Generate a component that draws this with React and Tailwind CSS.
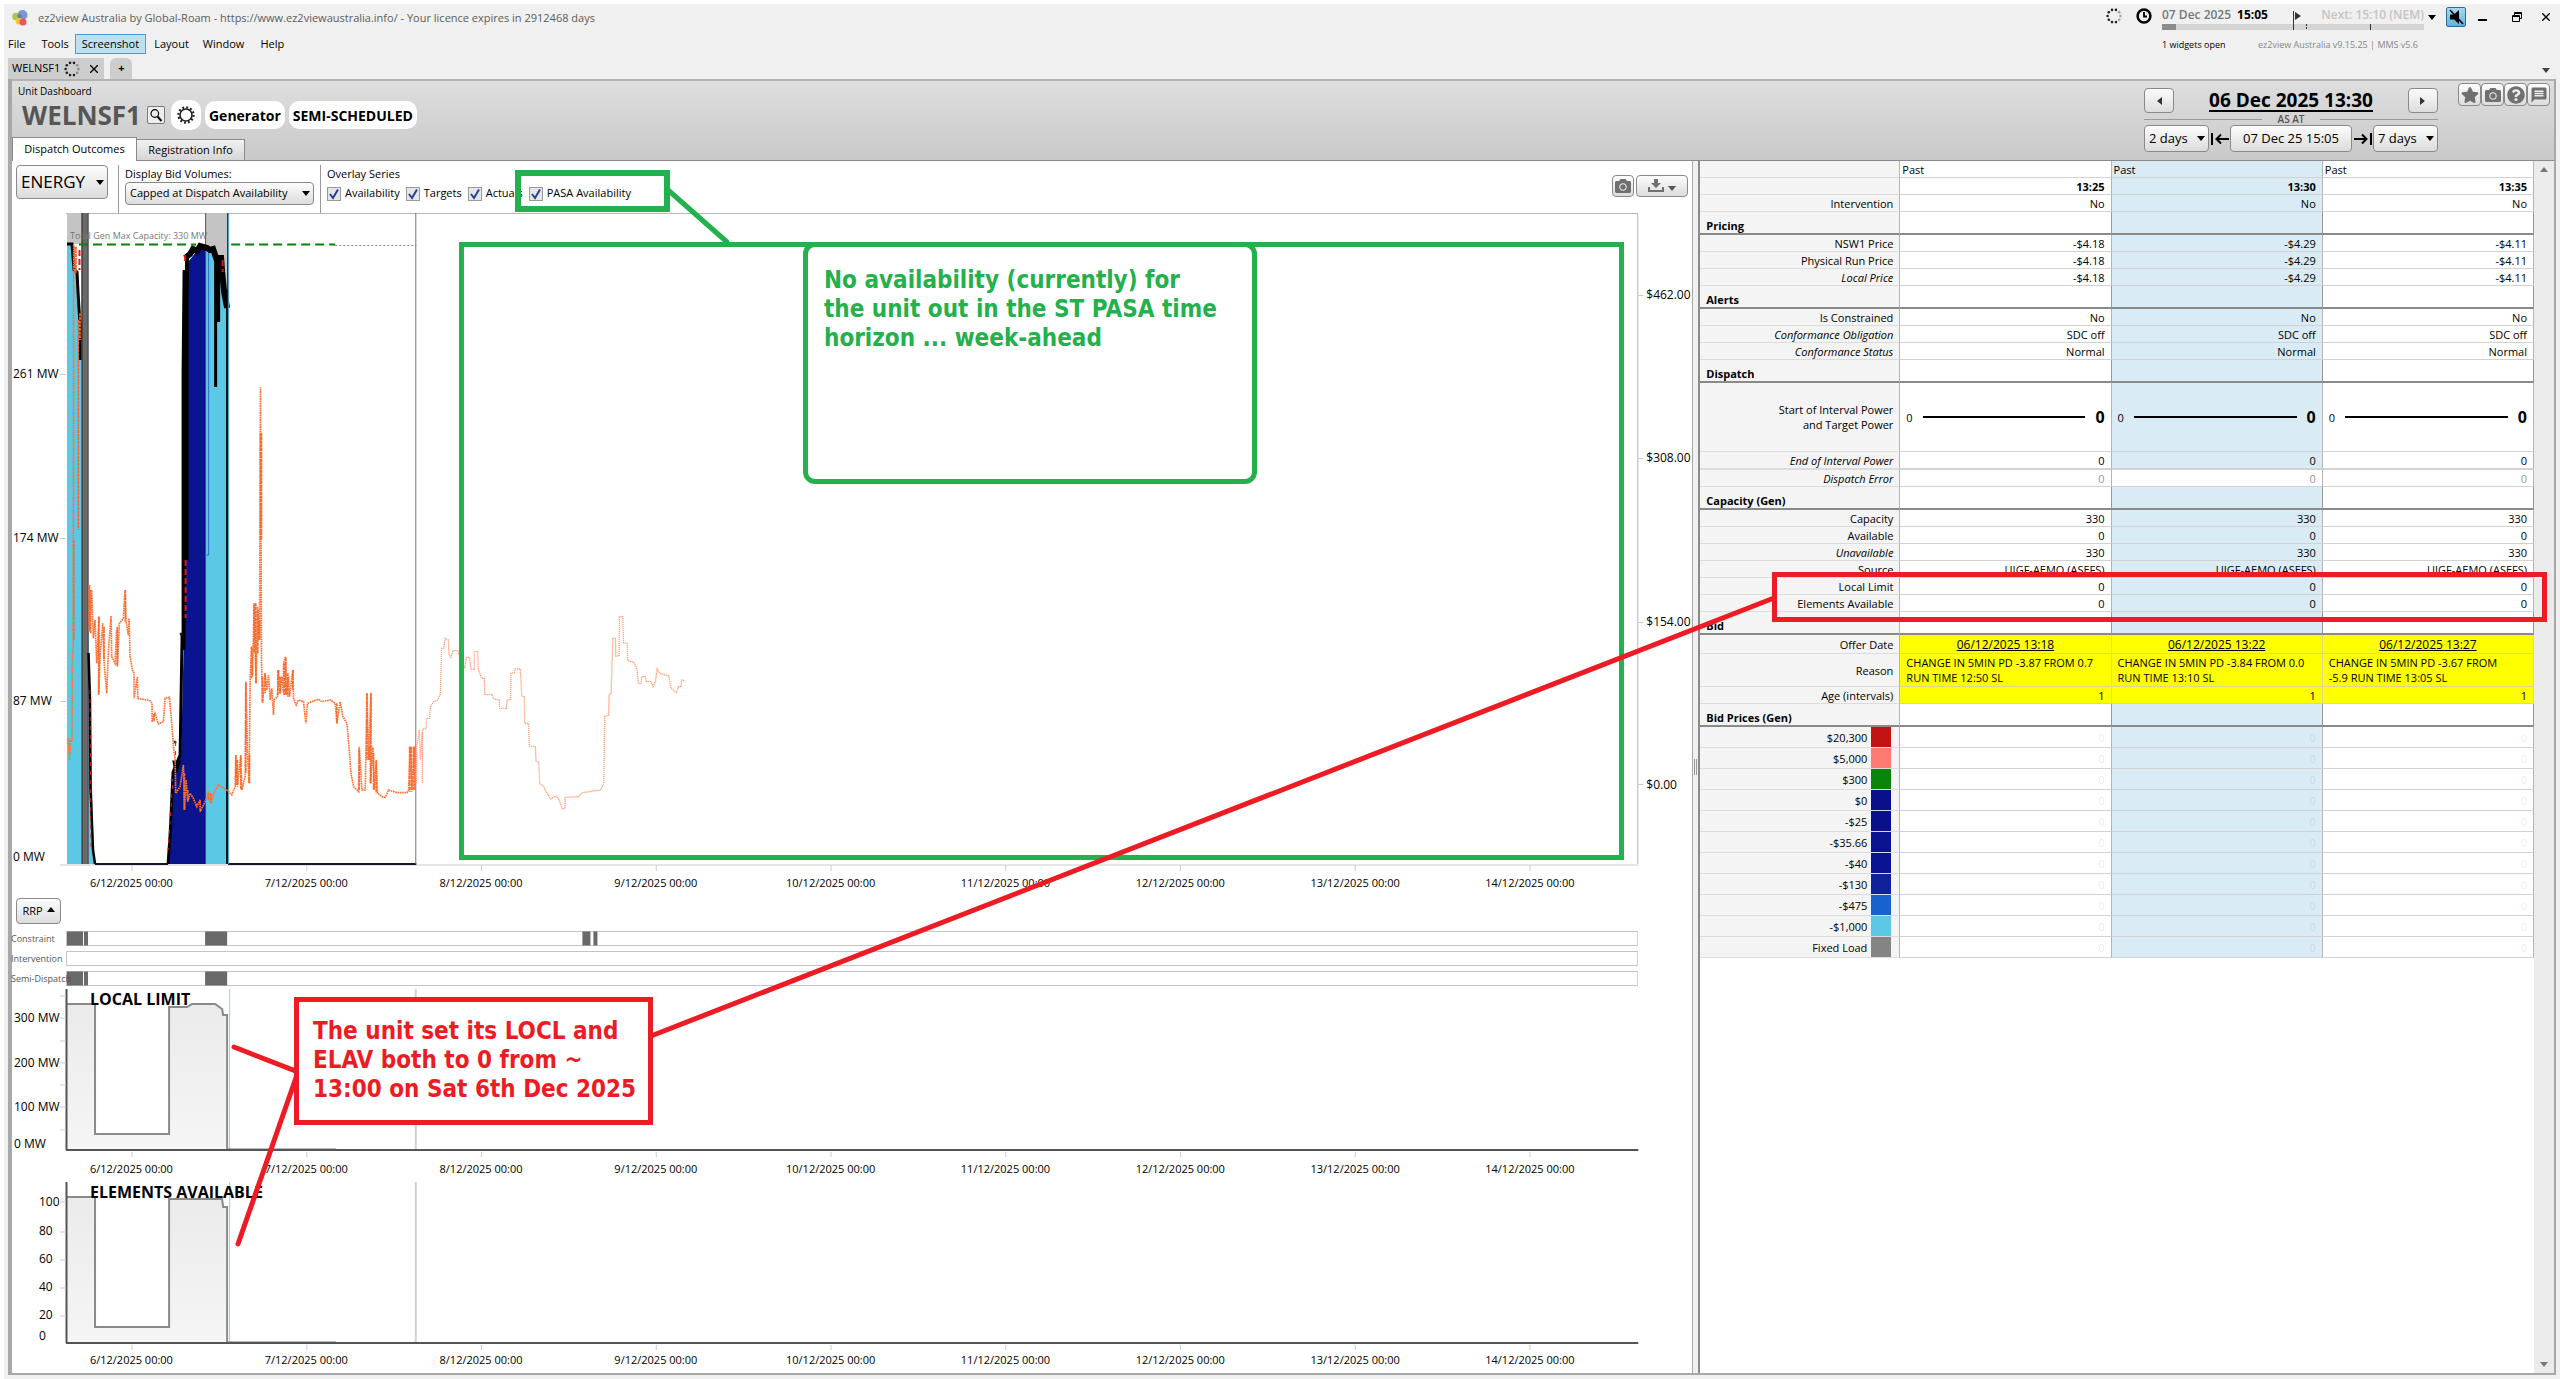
import { useState } from "react";
import clsx from "clsx";
import { FaStar, FaCamera, FaQuestionCircle } from "react-icons/fa";
import { MdMessage } from "react-icons/md";

const DATES = [6, 7, 8, 9, 10, 11, 12, 13, 14].map((d) => `${d}/12/2025 00:00`);
const TICKS = DATES.map((d, i) => 132 + i * 174.6);

const BTN = "rounded border border-[#8a8a8a] bg-linear-to-b from-[#fdfdfd] to-[#dcdcdc]";

const ROWS = [
  { label: "Intervention", values: ["No", "No", "No"] },
  { section: "Pricing" },
  { label: "NSW1 Price", values: ["-$4.18", "-$4.29", "-$4.11"] },
  { label: "Physical Run Price", values: ["-$4.18", "-$4.29", "-$4.11"] },
  { label: "Local Price", italic: true, values: ["-$4.18", "-$4.29", "-$4.11"] },
  { section: "Alerts" },
  { label: "Is Constrained", values: ["No", "No", "No"] },
  { label: "Conformance Obligation", italic: true, values: ["SDC off", "SDC off", "SDC off"] },
  { label: "Conformance Status", italic: true, values: ["Normal", "Normal", "Normal"] },
  { section: "Dispatch" },
  { power: true },
  { label: "End of Interval Power", italic: true, heavy: true, values: ["0", "0", "0"] },
  { label: "Dispatch Error", italic: true, plain: true, values: ["0", "0", "0"] },
  { section: "Capacity (Gen)" },
  { label: "Capacity", values: ["330", "330", "330"] },
  { label: "Available", values: ["0", "0", "0"] },
  { label: "Unavailable", italic: true, values: ["330", "330", "330"] },
  { label: "Source", values: ["UIGF-AEMO (ASEFS)", "UIGF-AEMO (ASEFS)", "UIGF-AEMO (ASEFS)"] },
  { label: "Local Limit", values: ["0", "0", "0"] },
  { label: "Elements Available", values: ["0", "0", "0"] },
  { section: "Bid" },
];

const OFFERS = [
  { date: "06/12/2025 13:18", reason: ["CHANGE IN 5MIN PD -3.87 FROM 0.7", "RUN TIME 12:50 SL"] },
  { date: "06/12/2025 13:22", reason: ["CHANGE IN 5MIN PD -3.84 FROM 0.0", "RUN TIME 13:10 SL"] },
  { date: "06/12/2025 13:27", reason: ["CHANGE IN 5MIN PD -3.67 FROM", "-5.9 RUN TIME 13:05 SL"] },
];

const BANDS = [
  ["$20,300", "bg-[#c31414]"],
  ["$5,000", "bg-[#ff7a72]"],
  ["$300", "bg-[#0a850a]"],
  ["$0", "bg-[#0a0f8c]"],
  ["-$25", "bg-[#0a0f8c]"],
  ["-$35.66", "bg-[#0a128f]"],
  ["-$40", "bg-[#0a1492]"],
  ["-$130", "bg-[#10219c]"],
  ["-$475", "bg-[#1862d0]"],
  ["-$1,000", "bg-[#5bc8e6]"],
  ["Fixed Load", "bg-[#848484]"],
];

// price trace, stored at three times the plot scale
const PRICE =
  "M205 535 209 600 211 540 216 545 217 300 220 250 221 -945 M268 75 268 215 275 90 280 235 285 180 290 310 297 170 296 405 300 290 308 190 312 305 320 400 325 275 333 168 335 290 345 310 350 205 352 320 358 190 370 175 375 90 378 185 385 225 387 175 390 290 397 330 402 340 402 415 412 350 413 415 450 422 456 430 456 485 465 460 475 492 490 485 495 415 508 412 515 490 520 560 525 600 527 700 540 680 550 615 553 750 558 660 563 725 570 700 580 715 590 740 600 720 600 755 615 725 625 700 632 730 640 700 655 675 665 680 680 690 695 705 705 680 707 585 712 675 722 585 725 690 735 650 737 365 742 580 747 670 750 350 755 260 757 350 762 130 765 275 768 370 772 140 778 240 781 -518 784 300 787 430 795 340 800 390 805 345 810 420 815 385 820 465 822 420 832 410 835 330 840 400 845 350 850 400 850 310 856 290 858 405 865 350 868 410 878 330 880 415 888 435 895 420 910 425 917 490 922 430 935 425 955 418 965 425 990 420 1005 430 1010 490 1020 425 1028 470 1040 490 1048 580 1052 640 1060 680 1075 695 1077 560 1085 690 1095 690 1100 400 1105 600 1112 400 1110 670 1118 560 1122 690 1128 605 1132 700 1145 710 1155 712 1165 690 1190 698 1220 698 1225 690 1230 560 1235 690 1242 560 1245 690";
const SPIKES =
  "M235 -720V-90 M240 -740V-660 M224 -940V-860 M228 -940V-860 M221 -60V240 M268 75V210 M272 90V220 M376 90V185 M296 170V400 M312 200V300 M352 200V315 M707 590V675 M712 600V680 M722 590V690 M737 370V640 M748 585V670 M754 260V355 M762 135V280 M767 130V370 M773 150V280 M778 180V240 M781 -380V-60 M784 -380V-60 M787 350V425 M795 340V400 M833 330V405 M840 350V400 M852 310V405 M857 295V405 M863 340V410 M878 330V390 M1010 430V490 M1077 570V690 M1100 400V600 M1112 400V670 M1107 560V600 M1120 580V690 M1128 600V700 M553 640V750 M563 690V720 M1228 560V695 M1234 560V695 M1241 560V690 M462 462V485 M625 700V720 M632 700V728";
const FORECAST =
  "M48 550 50 435 57 390 60 480 66 395 66 550 67 388 78 385 78 355 88 355 90 320 100 305 112 300 120 282 124 145 130 145 135 115 144 120 146 165 152 172 158 152 172 152 194 205 198 172 208 172 212 208 222 208 222 155 232 155 234 208 244 235 252 235 253 283 275 283 280 297 297 300 298 325 318 325 320 300 330 298 332 220 342 218 344 207 360 207 364 288 372 290 373 370 384 370 387 438 405 440 407 484 415 486 418 550 430 560 440 580 452 597 460 590 470 590 478 605 486 627 494 625 494 592 535 590 545 578 600 570 610 550 613 350 625 345 626 285 632 280 637 115 645 115 646 168 656 168 657 50 667 50 669 128 680 130 682 182 700 187 710 208 713 250 722 250 724 230 735 230 737 245 752 245 758 260 765 245 770 207 778 220 805 228 812 265 828 278 834 260 842 260 843 240 852 242";

function Spinner() {
  const dots = [0, 1, 2, 3, 4, 5, 6, 7, 8, 9];
  return (
    <svg viewBox="-8 -8 16 16" className="size-4">
      {dots.map((i) => (
        <circle
          key={i}
          cx={6.4 * Math.cos((i * Math.PI) / 5)}
          cy={6.4 * Math.sin((i * Math.PI) / 5)}
          r="1.3"
          fill="#222"
          opacity={i < 2 || i === 9 ? 0.4 : 1}
        />
      ))}
    </svg>
  );
}

function Caret({ className = "fill-black", up = false }) {
  return (
    <svg viewBox="0 0 8 5" className={clsx("h-[5px] w-2 shrink-0", className)}>
      <path d={up ? "M0 5 4 0 8 5Z" : "M0 0H8L4 5Z"} />
    </svg>
  );
}

function DropDown({ id, label, value, className }) {
  return (
    <span className="relative inline-flex items-center">
      <select
        id={id}
        aria-label={label}
        defaultValue={value}
        className={clsx(BTN, "appearance-none", className)}
      >
        <option>{value}</option>
      </select>
      <span className="pointer-events-none absolute right-1">
        <Caret />
      </span>
    </span>
  );
}

function TitleBar() {
  return (
    <header className="flex justify-between">
      <div>
        <div className="flex h-7 items-center gap-2.5 pl-2 text-[11px] text-[#5c5c5c]">
          <svg viewBox="0 0 16 16" className="size-4">
            <circle cx="10.500" cy="5" r="5" fill="#7f95cc" />
            <circle cx="4" cy="6.500" r="3.800" fill="#a5c94a" />
            <circle cx="7" cy="11" r="3.400" fill="#f3c531" />
            <circle cx="11" cy="12" r="3.500" fill="#e8575f" />
            <circle cx="7.500" cy="6" r="2.200" fill="#5e7fa6" />
          </svg>
          ez2view Australia by Global-Roam - https://www.ez2viewaustralia.info/ - Your licence expires in 2912468 days
        </div>
        <nav className="mt-0.5 flex h-5 items-center text-[11px]">
          <button className="px-1">File</button>
          <button className="ml-2 px-1">Tools</button>
          <button className="ml-0.5 h-5 border border-[#3ba4dc] bg-[#bfe0f0] px-1.5">Screenshot</button>
          <button className="ml-1 px-1">Layout</button>
          <button className="ml-1.5 px-1">Window</button>
          <button className="ml-2 px-1">Help</button>
        </nav>
        <div className="mt-1 ml-1 flex h-[21px] items-stretch gap-1.5 text-[11px]">
          <div className="flex items-center gap-1 bg-[#cdcdcd] pl-1">
            WELNSF1 <Spinner />
            <button aria-label="Close tab" className="px-1.5">
              <svg viewBox="0 0 8 8" className="size-2 stroke-black" strokeWidth="1.300">
                <path d="M0 0 8 8M8 0 0 8" />
              </svg>
            </button>
          </div>
          <button className="w-[22px] rounded-t-md bg-[#cdcdcd] font-bold">+</button>
        </div>
      </div>

      <div className="flex flex-col justify-between pr-2.5">
        <div className="flex items-start">
          <div className="mt-1 flex items-center gap-3.5">
            <Spinner />
            <svg viewBox="0 0 16 16" className="size-4 fill-none stroke-black" strokeWidth="2.500">
              <circle cx="8" cy="8" r="6.400" />
              <path d="M8 4V8.500H11" strokeWidth="1.800" />
            </svg>
          </div>
          <div className="ml-2.5 w-[262px]">
            <div className="mt-[3px] flex h-[15px] items-center text-[12px] font-semibold">
              <span className="text-[#777]">07 Dec 2025</span>
              <span className="ml-1.5 font-bold">15:05</span>
              <span className="ml-auto text-[#c4c4c4]">Next: 15:10 (NEM)</span>
            </div>
            <svg viewBox="0 0 262 20" className="-mt-3 block h-5 w-full" preserveAspectRatio="none">
              <path d="M0 14H262V20H0Z" fill="#d4d4d4" />
              <path d="M0 14H14V20H0Z" fill="#8c8c8c" />
              <path d="M131.500 1V20M208.500 14V20" stroke="#333" />
              <path d="M144.500 14V20" stroke="#333" strokeDasharray="2 1" />
              <path d="M133 2 139 6 133 10Z" fill="#333" />
            </svg>
            <div className="mt-2 flex justify-between text-[9px]">
              <span>1 widgets open</span>
              <span className="pr-1.5 text-[#888]">ez2view Australia v9.15.25 | MMS v5.6</span>
            </div>
          </div>
          <div className="mt-[3px] flex items-center">
            <button aria-label="More times" className="ml-1">
              <Caret />
            </button>
            <button
              aria-label="Mute"
              className="ml-2.5 flex size-5 items-center justify-center rounded-xs border border-[#2f6d94] bg-linear-to-b from-[#a9d8f3] to-[#5fb1e0]"
            >
              <svg viewBox="0 0 16 16" className="size-4">
                <path d="M2 5.500H6L11 1V15L6 10.500H2Z" />
                <path d="M2 1 15 15" stroke="#000" strokeWidth="1.600" />
              </svg>
            </button>
            <button aria-label="Minimise" className="ml-3">
              <svg viewBox="0 0 10 10" className="size-2.5"><path d="M0 7H9V9H0Z" /></svg>
            </button>
            <button aria-label="Restore" className="ml-6">
              <svg viewBox="0 0 10 10" className="size-2.5 fill-none stroke-black">
                <path d="M.5 3.500H7.500V9.500H.5ZM.5 4.500H7.500M2.500 3V.5H9.500V6.500H8M2.500 1.500H9.500" />
              </svg>
            </button>
            <button aria-label="Close" className="ml-5">
              <svg viewBox="0 0 8 8" className="size-2 stroke-black" strokeWidth="1.400">
                <path d="M0 0 8 8M8 0 0 8" />
              </svg>
            </button>
          </div>
        </div>
        <div className="mb-1.5 self-end">
          <Caret className="fill-[#444]" />
        </div>
      </div>
    </header>
  );
}

function UnitHeader() {
  const iconBtn = clsx(BTN, "flex size-[23px] items-center justify-center text-[#707070]");
  return (
    <div className="flex h-[82px] justify-between border-t-2 border-b border-t-[#b4b4b4] border-b-[#8a8a8a] bg-linear-to-b from-[#dedede] to-[#c9c9c9]">
      <div className="flex flex-col">
        <div className="px-1.5 pt-0.5 text-[10px] leading-4">Unit Dashboard</div>
        <div className="flex h-8 items-center pl-2.5">
          <h1 className="text-[26px] leading-8 font-bold text-[#565656]">WELNSF1</h1>
          <button aria-label="Find unit" className="ml-1.5 flex size-[18px] items-center justify-center rounded-xs border border-[#777] bg-[#eee]">
            <svg viewBox="0 0 14 14" className="size-3.5 fill-none stroke-black" strokeWidth="1.200">
              <circle cx="5.800" cy="5.500" r="3.800" />
              <path d="M8.500 8.500 12.500 13" strokeWidth="2" />
            </svg>
          </button>
          <button aria-label="Settings" className="ml-1.5 flex h-[30px] w-[30px] items-center justify-center rounded-[10px] bg-white">
            <svg viewBox="-10 -10 20 20" className="size-5 fill-none stroke-[#222]">
              <circle r="6" strokeWidth="1.600" />
              <circle r="7.600" strokeWidth="2.200" strokeDasharray="1.900 2.080" />
            </svg>
          </button>
          <span className="ml-1 flex h-7 items-center rounded-[10px] bg-white px-1 text-[14px] font-bold">Generator</span>
          <span className="ml-1 flex h-7 items-center rounded-[10px] bg-white px-1 text-[14px] font-bold">SEMI-SCHEDULED</span>
        </div>
        <div role="tablist" className="mt-auto flex items-end text-[11px]">
          <button role="tab" aria-selected="true" className="-mb-px h-6 w-[125px] border border-b-0 border-[#8a8a8a] bg-white">
            Dispatch Outcomes
          </button>
          <button role="tab" aria-selected="false" className="h-[21px] w-[108px] border border-b-0 border-l-0 border-[#8a8a8a] bg-linear-to-b from-[#f2f2f2] to-[#d6d6d6]">
            Registration Info
          </button>
        </div>
      </div>

      <div className="flex items-start gap-5 pt-0.5 pr-1">
        <div className="mt-[5px] w-[294px]">
          <div className="flex items-center justify-between">
            <button aria-label="Previous interval" className={clsx(BTN, "flex h-[25px] w-[30px] items-center justify-center")}>
              <svg viewBox="0 0 5 8" className="h-2 w-[5px] fill-[#333]"><path d="M5 0V8L0 4Z" /></svg>
            </button>
            <button className="border-b-2 border-black text-[19px] leading-5 font-bold">06 Dec 2025 13:30</button>
            <button aria-label="Next interval" className={clsx(BTN, "flex h-[25px] w-[30px] items-center justify-center")}>
              <svg viewBox="0 0 5 8" className="h-2 w-[5px] fill-[#333]"><path d="M0 0V8L5 4Z" /></svg>
            </button>
          </div>
          <div className="flex items-center gap-4 pt-px text-[10px] leading-[11px] font-semibold text-[#555]">
            <hr className="flex-1 border-[#999]" />
            AS AT
            <hr className="flex-1 border-[#999]" />
          </div>
          <div className="flex items-center justify-between text-[13px]">
            <DropDown label="Days back" value="2 days" className="h-[27px] w-[65px] pl-1" />
            <svg viewBox="0 0 18 12" className="h-3 w-[18px] fill-none stroke-black" strokeWidth="2">
              <path d="M1 0V12M18 6H6M10 1.500 5.500 6 10 10.500" />
            </svg>
            <button className={clsx(BTN, "h-[27px] w-[122px]")}>07 Dec 25 15:05</button>
            <svg viewBox="0 0 18 12" className="h-3 w-[18px] fill-none stroke-black" strokeWidth="2">
              <path d="M17 0V12M0 6H12M8 1.500 12.500 6 8 10.500" />
            </svg>
            <DropDown label="Days ahead" value="7 days" className="h-[27px] w-[65px] pl-1" />
          </div>
        </div>
        <div className="flex">
          <button aria-label="Favourite" className={iconBtn}><FaStar className="size-[18px]" /></button>
          <button aria-label="Snapshot" className={iconBtn}><FaCamera className="size-4" /></button>
          <button aria-label="Help" className={iconBtn}><FaQuestionCircle className="size-[18px]" /></button>
          <button aria-label="Comments" className={iconBtn}><MdMessage className="size-[18px]" /></button>
        </div>
      </div>
    </div>
  );
}

function Toolbar() {
  const [series, setSeries] = useState({
    Availability: true,
    Targets: true,
    Actuals: true,
    "PASA Availability": true,
  });
  return (
    <div className="flex h-[52px] pt-1 pl-1 text-[11px]">
      <div className="border-r border-[#999] pr-2.5">
        <DropDown label="Market" value="ENERGY" className="h-[34px] w-[92px] pl-1 text-[17px]" />
      </div>
      <div className="ml-1.5 border-r border-[#999] pr-1.5">
        <label htmlFor="bid-volumes" className="block leading-[17px]">Display Bid Volumes:</label>
        <DropDown id="bid-volumes" value="Capped at Dispatch Availability" className="h-[23px] w-[189px] pl-1" />
      </div>
      <div className="ml-1.5">
        <div className="leading-[17px]">Overlay Series</div>
        <div className="flex h-[23px] items-center gap-1.5">
          {Object.keys(series).map((name) => (
            <label key={name} className="flex items-center gap-1">
              <span className="relative flex">
                <input
                  type="checkbox"
                  checked={series[name]}
                  onChange={() => setSeries({ ...series, [name]: !series[name] })}
                  className="size-3.5 appearance-none border border-[#9a9a9a] bg-[#e4e6ea]"
                />
                {series[name] && (
                  <svg viewBox="0 0 14 14" className="pointer-events-none absolute size-3.5 fill-none stroke-[#2b3f90]" strokeWidth="2">
                    <path d="M3 7 6 11 11 2.500" />
                  </svg>
                )}
              </span>
              {name}
            </label>
          ))}
        </div>
      </div>
      <div className="mt-2.5 mr-1 ml-auto flex h-[22px] gap-0.5">
        <button aria-label="Copy chart" className={clsx(BTN, "flex w-[22px] items-center justify-center text-[#707070]")}>
          <FaCamera className="size-4" />
        </button>
        <button aria-label="Export" className={clsx(BTN, "flex w-[52px] items-center justify-center gap-1")}>
          <svg viewBox="0 0 16 14" className="h-3.5 w-4 fill-[#707070]">
            <path d="M6 0H10V4H13L8 9 3 4H6ZM0 8H2V11H14V8H16V13H0Z" />
          </svg>
          <Caret className="mt-1 fill-[#555]" />
        </button>
      </div>
    </div>
  );
}

function DateAxis({ className }) {
  return (
    <div className={clsx("mr-[75px] ml-8 flex text-[11px]", className)}>
      {DATES.map((d) => (
        <span key={d} className="flex-1 text-center">{d}</span>
      ))}
    </div>
  );
}

function YAxis({ items, right }) {
  return (
    <div className={clsx("text-[12px] leading-4", right && "pl-2")}>
      {items.map(([text, height]) => (
        <div key={text} className={clsx("flex items-end", height)}>{text}</div>
      ))}
    </div>
  );
}

function MainChart() {
  return (
    <div className="grid grid-cols-[54px_1fr_54px]">
      <div className="pl-px">
        <YAxis
          items={[
            ["261 MW", "h-[169px]"],
            ["174 MW", "h-[164px]"],
            ["87 MW", "h-[163px]"],
            ["0 MW", "h-[156px]"],
          ]}
        />
      </div>
      <div className="relative">
        <svg viewBox="66 213 1571 652" preserveAspectRatio="none" className="block h-[652px] w-full overflow-visible">
          <path d="M66 213.500H1636.500V864" fill="none" stroke="#b8b8b8" />
          <path d="M60 865H1637" stroke="#ccc" />
          <path d={TICKS.map((x) => `M${x} 865V871`).join("")} stroke="#ccc" />
          <path d="M60 374.500H66M60 538.500H66M60 701.500H66M1637 295.500H1642M1637 458.500H1642M1637 622.500H1642M1637 784.500H1642" stroke="#ccc" />
          <path d="M67 213H88V244H67ZM205 213H229V320H205Z" fill="#c4c4c4" />
          <path d="M67 244H73L78 275 81 360V864H67ZM88 600 90 700 94 864H88Z" fill="#5bc8e6" />
          <path d="M81 213H88.500V864H81Z" fill="#6a6a6a" />
          <path d="M82.500 213V864M88 213V864" stroke="#484848" />
          <path d="M168 864 173 775 181 755 184 630 186 300 188 262 196 252 206 247V864Z" fill="#0a148f" />
          <path d="M206 248H214L222 262 225 295 228 310V864H206Z" fill="#5bc8e6" />
          <path d="M208.500 250V555H206" fill="none" stroke="#2b6fc0" />
          <path d="M205.500 213V864" stroke="#555" />
          <g fill="none" stroke="#000">
            <path d="M67 244H72L74 270 77 272 78 292 80 325V360" strokeWidth="3" />
            <path d="M88.500 653 90 700 90.500 788 93 850 95 864" strokeWidth="2.500" />
            <path d="M168 864 170 835 173 772 180 755 182 635" strokeWidth="3" />
            <path d="M174 762 179 762 176 772Z" fill="#000" strokeWidth="3" />
            <path d="M183.500 650V372L184.500 270" strokeWidth="4" />
            <path d="M186.500 560V300L187 258" strokeWidth="4" />
            <path d="M185 258 190 254 193 249 197 251 200 246 207 248 210 250 213 249 216 258 221 258 222 272 224 292 227 308" strokeWidth="6" />
            <path d="M215.500 255V387" strokeWidth="3" />
            <path d="M218 258V322" strokeWidth="4" />
            <path d="M95 864H168M228 864H416" stroke="#15152c" strokeWidth="2" />
            <path d="M227 290V864" strokeWidth="2" />
          </g>
          <path d="M185.500 560V618M79.500 250V270M185 255V262M222.500 260V272" stroke="#e8121c" strokeWidth="2" strokeDasharray="6 3" fill="none" />
          <path d="M90 690 91 850M175.500 742V760M172.500 785 168 850" stroke="#e8121c" strokeDasharray="4 5" fill="none" />
          <circle cx="175" cy="742" r="1.500" fill="#444" />
          <circle cx="172" cy="780" r="1.500" fill="#444" />
          <circle cx="181" cy="634" r="1.500" fill="#222" />
          <path d="M228.500 213V864" stroke="#4fb4e0" />
          <path d="M227.500 213V864" stroke="#222" />
          <path d="M79 244.500H196M231 244.500H335" stroke="#068206" strokeWidth="2" strokeDasharray="9 5" />
          <path d="M335 245.500H416" stroke="#888" strokeDasharray="2 2" />
          <path d="M415.500 213V864" stroke="#777" />
          <g transform="translate(0 560) scale(0.33333)" fill="none" strokeWidth="5">
            <path d={PRICE} stroke="#ff7236" strokeDasharray="5 2" />
            <path d={SPIKES} stroke="#f96a2c" strokeDasharray="9 2" />
          </g>
          <g transform="translate(400 600) scale(0.33333)">
            <path d={FORECAST} fill="none" stroke="#ffa27c" strokeWidth="4" strokeDasharray="4 2" />
          </g>
        </svg>
        <span className="absolute top-4 left-1 text-[9px] text-[#777]">Total Gen Max Capacity: 330 MW</span>
      </div>
      <YAxis
        right
        items={[
          ["$462.00", "h-[90px]"],
          ["$308.00", "h-[163px]"],
          ["$154.00", "h-[164px]"],
          ["$0.00", "h-[163px]"],
        ]}
      />
    </div>
  );
}

function Strip({ label, blocks }) {
  return (
    <div className="grid h-[15px] grid-cols-[54px_1fr_54px]">
      <span className="relative z-10 -ml-px text-[9px] leading-[15px] whitespace-nowrap text-[#555]">{label}</span>
      <svg viewBox="0 0 1571 15" preserveAspectRatio="none" className="h-[15px] w-full">
        <rect x="0.500" y="0.500" width="1570" height="14" fill="#fff" stroke="#c4c4c4" />
        {blocks.map(([x, w]) => (
          <rect key={x} x={x} y="0.500" width={w} height="14" fill="#696969" />
        ))}
      </svg>
    </div>
  );
}

function MiniChart({ title, axis, line, base, top, ticks, pad }) {
  const fillId = title.replace(" ", "");
  return (
    <div className="grid grid-cols-[54px_1fr_54px]">
      <div className={pad}>
        <YAxis items={axis} />
      </div>
      <div className="relative">
        <svg viewBox={`66 ${top} 1571 162`} preserveAspectRatio="none" className="block h-[162px] w-full overflow-visible">
          <defs>
            <linearGradient id={fillId} x2="0" y2="1">
              <stop offset="0" stopColor="#ebebeb" />
              <stop offset="1" stopColor="#f5f5f5" />
            </linearGradient>
          </defs>
          <path d={`M66 ${base}V${line}V${base}Z`} fill={`url(#${fillId})`} />
          <path d={`M66 ${line}V${base}`} fill="none" stroke="#8a8a8a" strokeWidth="2" />
          <path d={`M229.500 ${top}V${base}`} stroke="#9cd0ea" />
          <path d={`M415.500 ${top}V${base}`} stroke="#d0d0d0" strokeWidth="2" />
          <path d={`M227 ${base - 1}H336`} stroke="#777" />
          <path d={`M66.500 ${top}V${base}M66 ${base}H1637`} stroke="#555" strokeWidth="2" />
          <path d={TICKS.map((x) => `M${x} ${base + 2}V${base + 7}`).join("") + ticks.map((y) => `M60 ${y}H66`).join("")} stroke="#ccc" />
        </svg>
        <h2 className="absolute top-0 left-6 text-[16px] leading-5 font-bold whitespace-nowrap">{title}</h2>
      </div>
    </div>
  );
}

function ChartPane() {
  return (
    <section className="min-w-0 flex-1 bg-white">
      <Toolbar />
      <MainChart />
      <DateAxis className="h-[33px] items-center pt-1" />
      <button className={clsx(BTN, "ml-1 flex h-[26px] w-[45px] items-center justify-center gap-1 text-[11px]")}>
        RRP <Caret up className="mb-1 fill-black" />
      </button>
      <div className="mt-[7px] mb-[3px] flex flex-col gap-[5px]">
        <Strip label="Constraint" blocks={[[1, 16], [18, 4], [139, 22], [516, 8], [527, 4]]} />
        <Strip label="Intervention" blocks={[]} />
        <Strip label="Semi-Dispatch" blocks={[[1, 16], [18, 4], [139, 22]]} />
      </div>
      <MiniChart
        title="LOCAL LIMIT"
        top={989}
        base={1150}
        line="1004H95V1134H169V1007H187L192 1004H215L222 1009 223 1015H227"
        ticks={[996, 1018, 1041, 1063, 1085, 1107, 1130]}
        pad="pl-0.5"
        axis={[
          ["300 MW", "h-[37px]"],
          ["200 MW", "h-[45px]"],
          ["100 MW", "h-[44px]"],
          ["0 MW", "h-[37px]"],
        ]}
      />
      <DateAxis className="h-[30px] items-center pt-1" />
      <MiniChart
        title="ELEMENTS AVAILABLE"
        top={1182}
        base={1343}
        line="1197H95V1327H169V1199H222L223 1207H227"
        ticks={[1202, 1232, 1260, 1288, 1316]}
        pad="pl-[27px]"
        axis={[
          ["100", "h-7"],
          ["80", "h-[29px]"],
          ["60", "h-[28px]"],
          ["40", "h-[28px]"],
          ["20", "h-[28px]"],
          ["0", "h-[21px]"],
        ]}
      />
      <DateAxis className="h-[29px] items-center pt-1" />
    </section>
  );
}

const COL_BG = ["bg-white", "bg-[#d9ebf4]", "bg-white"];
const CELL = "border-r border-b border-r-[#b4b4b4] border-b-[#d2d2d2] px-1.5 py-0";
const LABEL = "border-r border-b border-r-[#b4b4b4] border-b-[#dcdcdc] bg-[#f4f4f4] px-1.5 py-0 text-right font-normal whitespace-nowrap";

function SectionRow({ name }) {
  return (
    <tr className="h-[23px]">
      <th scope="row" className="border-r border-b-2 border-r-[#b4b4b4] border-b-[#8a8a8a] bg-[#f4f4f4] px-1.5 py-0 text-left align-bottom font-bold">
        {name}
      </th>
      {COL_BG.map((bg, i) => (
        <td key={i} className={clsx("border-r border-b-2 border-r-[#999] border-b-[#8a8a8a] p-0", bg)} />
      ))}
    </tr>
  );
}

function DataRow({ row }) {
  if (row.section) return <SectionRow name={row.section} />;
  if (row.power) {
    return (
      <tr className="h-[69px]">
        <th scope="row" className={LABEL}>Start of Interval Power<br />and Target Power</th>
        {COL_BG.map((bg, i) => (
          <td key={i} className={clsx(CELL, bg)}>
            <div className="flex items-center gap-2.5">
              0 <span className="h-0.5 flex-1 bg-black" />
              <b className="text-[16px]">0</b>
            </div>
          </td>
        ))}
      </tr>
    );
  }
  return (
    <tr className={row.heavy ? "h-[18px]" : "h-[17px]"}>
      <th scope="row" className={clsx(LABEL, row.italic && "italic", row.heavy && "border-b-2 border-b-[#555]")}>{row.label}</th>
      {row.values.map((v, i) => (
        <td
          key={i}
          className={clsx(CELL, "text-right", row.plain ? "bg-white text-[#999]" : COL_BG[i], row.heavy && "border-b-2 border-b-[#555]")}
        >
          {v}
        </td>
      ))}
    </tr>
  );
}

function DataPane() {
  const yellow = "border-r border-b border-[#d8d890] bg-[#ffff00] py-0";
  return (
    <section className="flex w-[33.9%] shrink-0 bg-white">
      <div className="flex w-2 items-center justify-center gap-px border-r-2 border-l border-r-[#8a8a8a] border-l-[#aaa] bg-[#f0f0f0]">
        <span className="h-4 w-px bg-[#999]" />
        <span className="h-4 w-px bg-[#999]" />
      </div>
      <div className="min-w-0 flex-1">
        <table className="w-full table-fixed border-separate border-spacing-0 text-[11px] leading-[15px]">
          <colgroup>
            <col className="w-[24%]" />
            <col />
            <col />
            <col />
          </colgroup>
          <thead>
            <tr className="h-[17px]">
              <th className={LABEL} />
              {COL_BG.map((bg, i) => (
                <th key={i} className={clsx("border-r border-b border-r-[#b4b4b4] border-b-[#d2d2d2] px-0.5 py-0 text-left font-normal", bg)}>Past</th>
              ))}
            </tr>
            <tr className="h-[17px]">
              <th className={LABEL} />
              {["13:25", "13:30", "13:35"].map((t, i) => (
                <th key={t} className={clsx(CELL, "text-right font-bold", COL_BG[i])}>{t}</th>
              ))}
            </tr>
          </thead>
          <tbody>
            {ROWS.map((row, i) => (
              <DataRow key={i} row={row} />
            ))}
            <tr className="h-[19px]">
              <th scope="row" className={LABEL}>Offer Date</th>
              {OFFERS.map((o) => (
                <td key={o.date} className={clsx(yellow, "px-1 text-center text-[12px]")}>
                  <a href="#offer" className="underline">{o.date}</a>
                </td>
              ))}
            </tr>
            <tr className="h-[33px]">
              <th scope="row" className={LABEL}>Reason</th>
              {OFFERS.map((o) => (
                <td key={o.date} className={clsx(yellow, "overflow-hidden pl-1.5 whitespace-nowrap")}>
                  {o.reason[0]}<br />{o.reason[1]}
                </td>
              ))}
            </tr>
            <tr className="h-[17px]">
              <th scope="row" className={LABEL}>Age (intervals)</th>
              {OFFERS.map((o) => (
                <td key={o.date} className={clsx(yellow, "px-1.5 text-right")}>1</td>
              ))}
            </tr>
            <SectionRow name="Bid Prices (Gen)" />
            {BANDS.map(([name, color]) => (
              <tr key={name} className="h-[21px]">
                <th scope="row" className="border-r border-b border-r-[#b4b4b4] border-b-[#dcdcdc] bg-[#f4f4f4] py-0 pr-2 pl-1 font-normal">
                  <div className="flex items-center justify-end gap-1">
                    {name}
                    <span className={clsx("h-5 w-5", color)} />
                  </div>
                </th>
                {COL_BG.map((bg, i) => (
                  <td key={i} className={clsx(CELL, "text-right text-black/10", bg)}>0</td>
                ))}
              </tr>
            ))}
          </tbody>
        </table>
      </div>
      <div className="flex w-5 flex-col items-center justify-between bg-[#ebebeb] py-1.5">
        <Caret up className="fill-[#777]" />
        <Caret className="fill-[#777]" />
      </div>
    </section>
  );
}

function Annotations() {
  return (
    <div className="pointer-events-none absolute inset-0">
      <div className="absolute top-[242px] left-[17.930%] h-[618px] w-[45.510%] border-[5px] border-[#22b14c]" />
      <div className="absolute top-[170px] left-[515px] h-[42px] w-[155px] border-[6px] border-[#22b14c]" />
      <div className="absolute top-[572px] left-[69.220%] h-[50px] w-[30.270%] border-[5px] border-[#ed1c24]" />
      <svg viewBox="0 0 2560 1379" preserveAspectRatio="none" className="absolute top-0 left-0 h-[1379px] w-full" strokeWidth="5" strokeLinecap="round">
        <path d="M668 190 727 242" stroke="#22b14c" />
        <path d="M234 1047 298 1072 238 1244M651 1036 1774 598" fill="none" stroke="#ed1c24" />
      </svg>
      <div className="absolute top-[242px] left-[803px] h-[242px] w-[454px] rounded-xl border-[5px] border-[#22b14c] bg-white px-4 pt-[19px] font-['DejaVu_Sans_Condensed','DejaVu_Sans',sans-serif] text-[24px] leading-[29px] font-bold whitespace-nowrap text-[#22b14c]">
        No availability (currently) for<br />the unit out in the ST PASA time<br />horizon ... week-ahead
      </div>
      <div className="absolute top-[997px] left-[294px] h-[128px] w-[359px] border-[5px] border-[#ed1c24] bg-white px-3.5 pt-[15px] font-['DejaVu_Sans_Condensed','DejaVu_Sans',sans-serif] text-[24px] leading-[29px] font-bold whitespace-nowrap text-[#ed1c24]">
        The unit set its LOCL and<br />ELAV both to 0 from ~<br />13:00 on Sat 6th Dec 2025
      </div>
    </div>
  );
}

export default function App() {
  return (
    <div className="relative flex min-h-screen flex-col bg-white pt-1 pl-1 font-['Open_Sans','Noto_Sans',sans-serif] text-black">
      <div className="flex flex-1 flex-col bg-[#f0f0f0]">
        <TitleBar />
        <main className="mr-1 ml-1 flex flex-1 flex-col border-r-2 border-b-2 border-l-4 border-[#a8a8a8]">
          <UnitHeader />
          <div className="flex flex-1">
            <ChartPane />
            <DataPane />
          </div>
        </main>
        <div className="mt-1 h-px bg-[#777]" />
      </div>
      <Annotations />
    </div>
  );
}
